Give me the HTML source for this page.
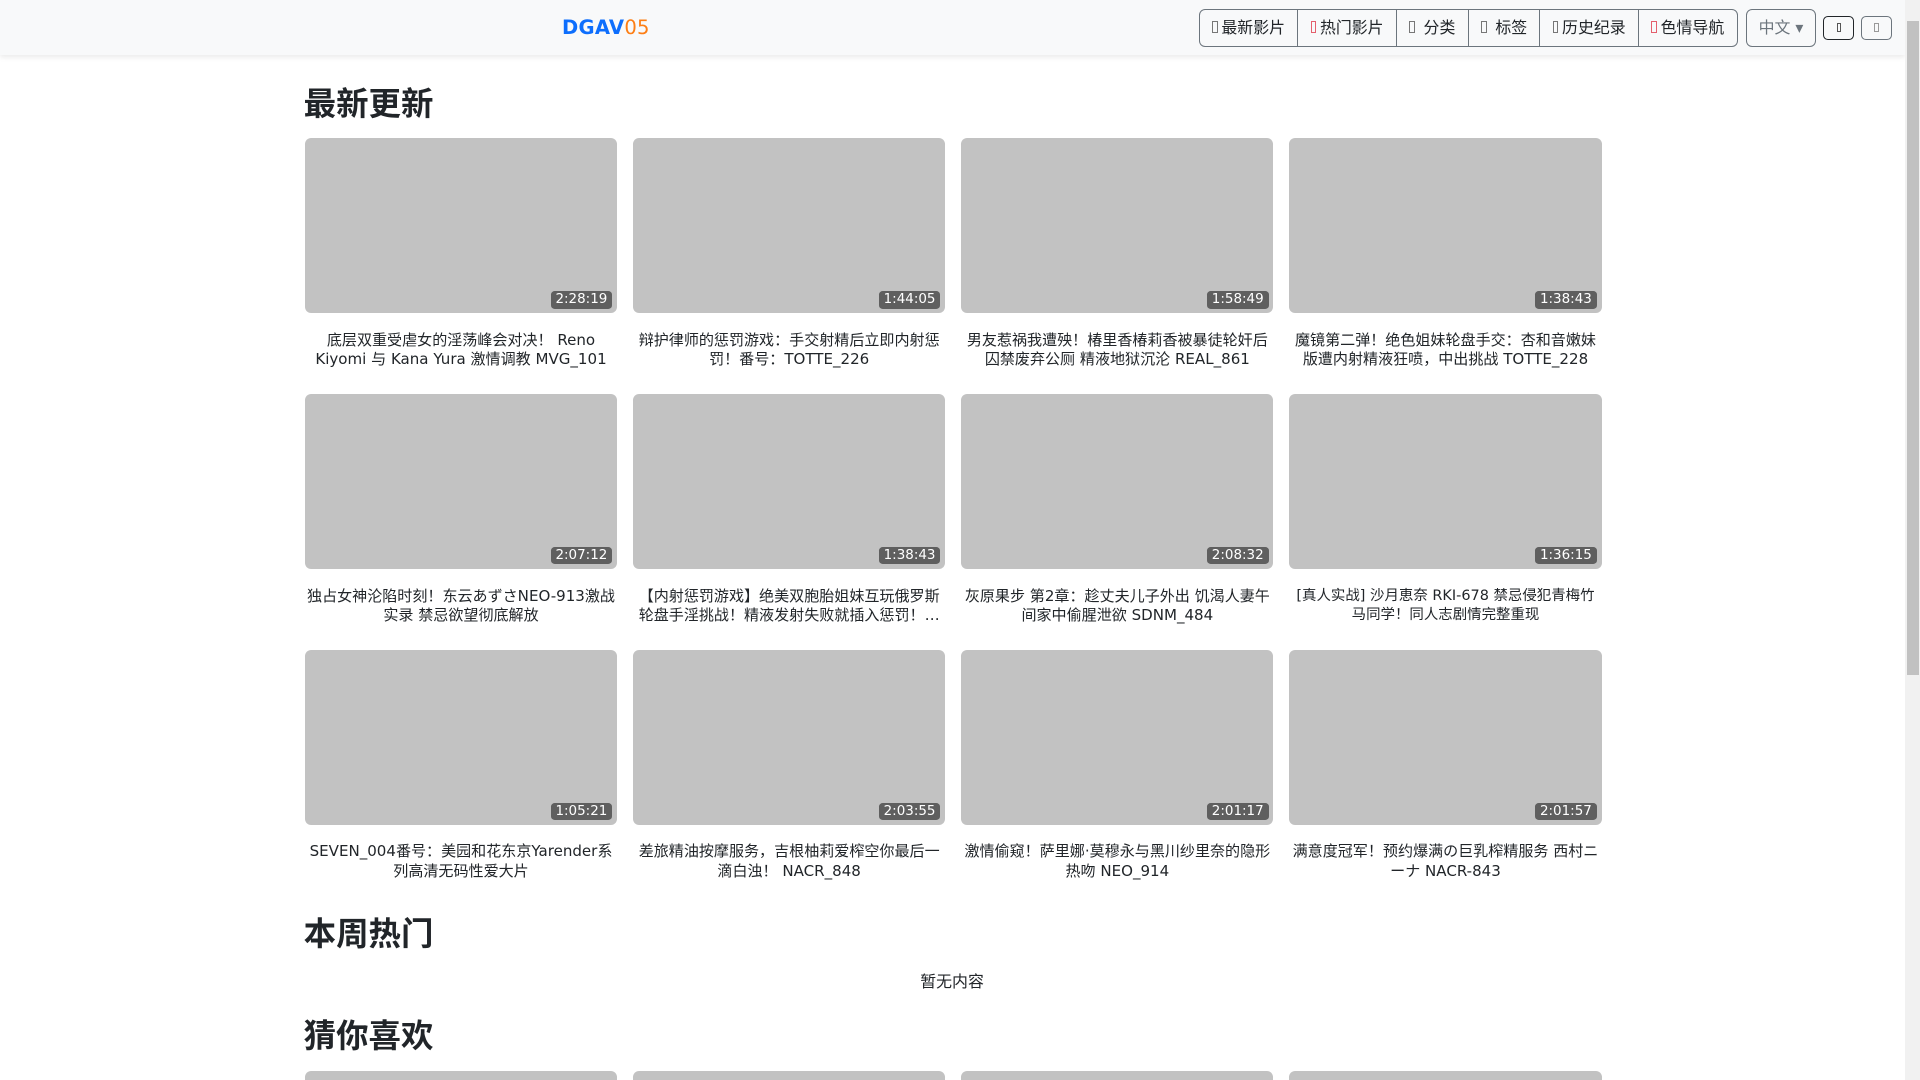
<!DOCTYPE html>
<html><head><meta charset="utf-8">
<style>
html,body{margin:0;padding:0;overflow:hidden;height:100%}
body{zoom:1.22449;width:1568px;height:882px;background:#fff;font-family:"DejaVu Sans","Noto Sans CJK SC",sans-serif;color:#212529;position:relative;overflow:hidden}
.wrap{position:absolute;left:0;top:0;width:1568px;height:882px;overflow:hidden}
.nav{position:absolute;left:0;top:0;width:1556px;height:45px;background:#f8f9fa;box-shadow:0 2px 4px rgba(0,0,0,.08)}
.brand{position:absolute;left:459px;top:13px;font-size:16px;font-weight:bold;color:#0d6efd;letter-spacing:.2px}
.brand span{color:#fd7e14;font-weight:normal}
.grp{position:absolute;left:979px;top:7px;width:440px;height:31px;display:flex;border:1px solid #6c757d;border-radius:5px;box-sizing:border-box;overflow:hidden}
.grp div{border-left:1px solid #6c757d;flex:auto;text-align:center;font-size:13px;line-height:29px;color:#212529;white-space:nowrap}
.grp div:first-child{border-left:none}
.ic{display:inline-block;width:3px;height:8px;border:1px solid #777;margin-right:3px;vertical-align:0}
.ic.r{border-color:#e4606d}
.dd{position:absolute;left:1426px;top:7px;width:57px;height:31px;box-sizing:border-box;border:1px solid #6c757d;border-radius:5px;font-size:13px;line-height:29px;color:#6c757d;text-align:center}
.sb{position:absolute;top:13px;width:25px;height:20px;box-sizing:border-box;border:1px solid #6c757d;border-radius:4px}
.sb i{position:absolute;left:10px;top:5px;width:2px;height:6px;border:1px solid #555}
.scroll{position:absolute;left:1556px;top:0;width:12px;height:882px;background:#f1f1f1}
.thumbbar{position:absolute;left:1557px;top:17px;width:10px;height:534px;background:#c1c1c1}
h2{position:absolute;left:248px;margin:0;font-size:26.5px;font-weight:bold;line-height:32px;font-family:"Noto Sans CJK SC",sans-serif}
.card{position:absolute;width:255px}
.th{height:143px;background:#c2c2c2;border-radius:5px;position:relative}
.dur{position:absolute;right:4px;bottom:4px;background:#5f5f5f;color:#fff;font-size:11px;line-height:14px;padding:0 4px;border-radius:3px}
.t{margin-top:14px;font-size:12.3px;line-height:16px;text-align:center;padding:0 1px;height:32px;overflow:hidden;word-break:break-all}
.empty{position:absolute;left:248px;width:1059px;top:791px;text-align:center;font-size:13px}
</style></head><body><div class="wrap">
<div class="nav">
<div class="brand">DGAV<span>05</span></div>
<div class="grp">
<div><i class="ic"></i>最新影片</div>
<div><i class="ic r"></i>热门影片</div>
<div><i class="ic"></i> 分类</div>
<div><i class="ic"></i> 标签</div>
<div><i class="ic"></i>历史纪录</div>
<div><i class="ic r"></i>色情导航</div>
</div>
<div class="dd">中文 ▾</div>
<div class="sb" style="left:1489px;border-color:#212529"><i></i></div>
<div class="sb" style="left:1520px"><i style="border-color:#999"></i></div>
</div>
<div class="scroll"></div><div class="thumbbar"></div>

<h2 style="top:67px">最新更新</h2>

<div class="card" style="left:249px;top:113px"><div class="th"><span class="dur">2:28:19</span></div><div class="t">底层双重受虐女的淫荡峰会对决！ Reno<br>Kiyomi 与 Kana Yura 激情调教 MVG_101</div></div>
<div class="card" style="left:517px;top:113px"><div class="th"><span class="dur">1:44:05</span></div><div class="t">辩护律师的惩罚游戏：手交射精后立即内射惩<br>罚！番号：TOTTE_226</div></div>
<div class="card" style="left:785px;top:113px"><div class="th"><span class="dur">1:58:49</span></div><div class="t">男友惹祸我遭殃！椿里香椿莉香被暴徒轮奸后<br>囚禁废弃公厕 精液地狱沉沦 REAL_861</div></div>
<div class="card" style="left:1053px;top:113px"><div class="th"><span class="dur">1:38:43</span></div><div class="t">魔镜第二弹！绝色姐妹轮盘手交：杏和音嫩妹<br>版遭内射精液狂喷，中出挑战 TOTTE_228</div></div>

<div class="card" style="left:249px;top:322px"><div class="th"><span class="dur">2:07:12</span></div><div class="t">独占女神沦陷时刻！东云あずさNEO-913激战<br>实录 禁忌欲望彻底解放</div></div>
<div class="card" style="left:517px;top:322px"><div class="th"><span class="dur">1:38:43</span></div><div class="t">【内射惩罚游戏】绝美双胞胎姐妹互玩俄罗斯<br>轮盘手淫挑战！精液发射失败就插入惩罚！…</div></div>
<div class="card" style="left:785px;top:322px"><div class="th"><span class="dur">2:08:32</span></div><div class="t">灰原果步 第2章：趁丈夫儿子外出 饥渴人妻午<br>间家中偷腥泄欲 SDNM_484</div></div>
<div class="card" style="left:1053px;top:322px"><div class="th"><span class="dur">1:36:15</span></div><div class="t" style="font-size:11.8px;padding:0">[真人实战] 沙月恵奈 RKI-678 禁忌侵犯青梅竹<br>马同学！同人志剧情完整重现</div></div>

<div class="card" style="left:249px;top:531px"><div class="th"><span class="dur">1:05:21</span></div><div class="t">SEVEN_004番号：美园和花东京Yarender系<br>列高清无码性爱大片</div></div>
<div class="card" style="left:517px;top:531px"><div class="th"><span class="dur">2:03:55</span></div><div class="t">差旅精油按摩服务，吉根柚莉爱榨空你最后一<br>滴白浊！ NACR_848</div></div>
<div class="card" style="left:785px;top:531px"><div class="th"><span class="dur">2:01:17</span></div><div class="t">激情偷窥！萨里娜·莫穆永与黑川纱里奈的隐形<br>热吻 NEO_914</div></div>
<div class="card" style="left:1053px;top:531px"><div class="th"><span class="dur">2:01:57</span></div><div class="t">满意度冠军！预约爆满の巨乳榨精服务 西村ニ<br>ーナ NACR-843</div></div>

<h2 style="top:745px">本周热门</h2>
<div class="empty">暂无内容</div>
<h2 style="top:828px">猜你喜欢</h2>
<div class="card" style="left:249px;top:875px"><div class="th"></div></div>
<div class="card" style="left:517px;top:875px"><div class="th"></div></div>
<div class="card" style="left:785px;top:875px"><div class="th"></div></div>
<div class="card" style="left:1053px;top:875px"><div class="th"></div></div>
</div></body></html>
